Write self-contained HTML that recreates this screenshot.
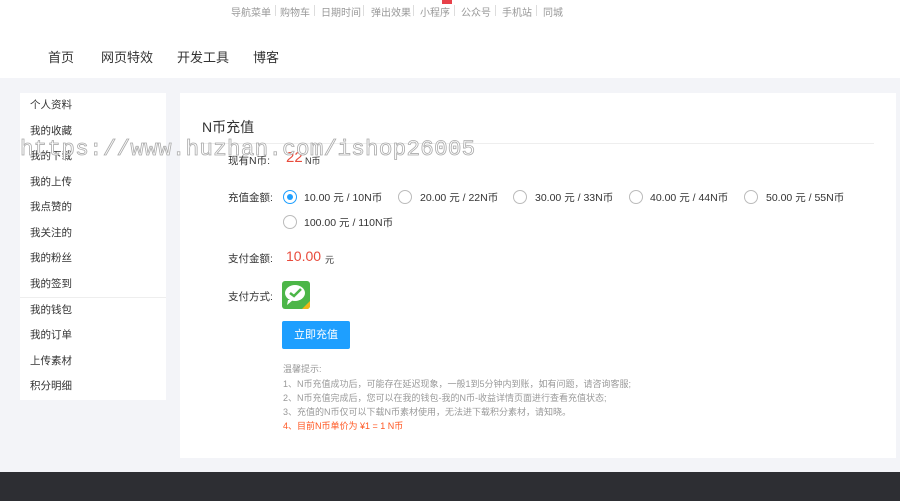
<!DOCTYPE html>
<html><head><meta charset="utf-8"><style>
*{margin:0;padding:0;box-sizing:border-box}
body{width:900px;height:501px;overflow:hidden;background:#f3f4f8;font-family:"Liberation Sans","Noto Sans CJK SC",sans-serif;position:relative;color:#333}
.a{position:absolute;white-space:nowrap}
#top{position:absolute;left:0;top:0;width:900px;height:78px;background:#fff}
.tn{font-size:10px;color:#999;top:4px}
.sep{position:absolute;top:5px;width:1px;height:11px;background:#ddd}
.nav{font-size:13px;color:#333;top:47px}
#side{position:absolute;left:20px;top:93px;width:146px;height:307px;background:#fff}
.si{font-size:10.5px;color:#333;left:30px}
#main{position:absolute;left:180px;top:93px;width:716px;height:365px;background:#fff}
.lb{font-size:10.5px;color:#333}
.r{position:absolute;width:14px;height:14px;border:1px solid #bbb;border-radius:50%}
.ro{font-size:10.5px;color:#333}
.tip{font-size:9px;color:#999;left:283px}
#foot{position:absolute;left:0;top:472px;width:900px;height:29px;background:#2d2e33}
</style></head><body>
<div id="top">
<span class="a tn" style="left:231px">导航菜单</span><div class="sep" style="left:275px"></div>
<span class="a tn" style="left:280px">购物车</span><div class="sep" style="left:314px"></div>
<span class="a tn" style="left:321px">日期时间</span><div class="sep" style="left:363px"></div>
<span class="a tn" style="left:371px">弹出效果</span><div class="sep" style="left:413px"></div>
<span class="a tn" style="left:420px">小程序</span><div class="sep" style="left:454px"></div>
<div class="a" style="left:442px;top:0;width:10px;height:4px;background:#e8414a"></div>
<span class="a tn" style="left:461px">公众号</span><div class="sep" style="left:495px"></div>
<span class="a tn" style="left:502px">手机站</span><div class="sep" style="left:536px"></div>
<span class="a tn" style="left:543px">同城</span>
<span class="a nav" style="left:48px">首页</span>
<span class="a nav" style="left:101px">网页特效</span>
<span class="a nav" style="left:177px">开发工具</span>
<span class="a nav" style="left:253px">博客</span>
</div>
<div id="side"></div>
<span class="a si" style="top:97px">个人资料</span>
<span class="a si" style="top:123px">我的收藏</span>
<span class="a si" style="top:148px">我的下载</span>
<span class="a si" style="top:174px">我的上传</span>
<span class="a si" style="top:199px">我点赞的</span>
<span class="a si" style="top:225px">我关注的</span>
<span class="a si" style="top:250px">我的粉丝</span>
<span class="a si" style="top:276px">我的签到</span>
<div class="a" style="left:20px;top:297px;width:146px;height:1px;background:#eee"></div>
<span class="a si" style="top:302px">我的钱包</span>
<span class="a si" style="top:327px">我的订单</span>
<span class="a si" style="top:353px">上传素材</span>
<span class="a si" style="top:378px">积分明细</span>
<div id="main"></div>
<span class="a" style="left:202px;top:117px;font-size:14px;color:#333">N币充值</span>
<div class="a" style="left:200px;top:143px;width:674px;height:1px;background:#eee"></div>
<span class="a lb" style="left:228px;top:153px">现有N币:</span>
<span class="a" style="left:286px;top:149px;font-size:15px;color:#e84b3c">22</span>
<span class="a" style="left:305px;top:154px;font-size:9px;color:#333">N币</span>
<span class="a lb" style="left:228px;top:190px">充值金额:</span>
<div class="r" style="left:283px;top:190px;border-color:#1e9fff"><div style="position:absolute;left:3px;top:3px;width:6px;height:6px;border-radius:50%;background:#1e9fff"></div></div>
<span class="a ro" style="left:304px;top:190px">10.00 元 / 10N币</span>
<div class="r" style="left:398px;top:190px"></div><span class="a ro" style="left:420px;top:190px">20.00 元 / 22N币</span>
<div class="r" style="left:513px;top:190px"></div><span class="a ro" style="left:535px;top:190px">30.00 元 / 33N币</span>
<div class="r" style="left:629px;top:190px"></div><span class="a ro" style="left:650px;top:190px">40.00 元 / 44N币</span>
<div class="r" style="left:744px;top:190px"></div><span class="a ro" style="left:766px;top:190px">50.00 元 / 55N币</span>
<div class="r" style="left:283px;top:215px"></div><span class="a ro" style="left:304px;top:215px">100.00 元 / 110N币</span>
<span class="a lb" style="left:228px;top:251px">支付金额:</span>
<span class="a" style="left:286px;top:248px;font-size:14px;color:#e84b3c">10.00</span>
<span class="a" style="left:325px;top:253px;font-size:9px;color:#333">元</span>
<span class="a lb" style="left:228px;top:289px">支付方式:</span>
<div class="a" style="left:282px;top:281px;width:28px;height:28px;background:#4cb648;border-radius:3px;overflow:hidden">
<svg width="28" height="28" viewBox="0 0 28 28"><ellipse cx="13" cy="12" rx="10" ry="8" fill="#fff"/><path d="M6 19 L5 24 L11 19Z" fill="#fff"/><path d="M8 12 L12 15 L19 8" stroke="#4cb648" stroke-width="2.5" fill="none"/><path d="M20 28 L28 20 L28 28Z" fill="#f2b518"/></svg></div>
<div class="a" style="left:282px;top:321px;width:68px;height:28px;background:#1e9fff;border-radius:2px;color:#fff;font-size:11px;text-align:center;line-height:28px">立即充值</div>
<span class="a tip" style="top:362px">温馨提示:</span>
<span class="a tip" style="top:377px">1、N币充值成功后，可能存在延迟现象，一般1到5分钟内到账，如有问题，请咨询客服;</span>
<span class="a tip" style="top:391px">2、N币充值完成后，您可以在我的钱包-我的N币-收益详情页面进行查看充值状态;</span>
<span class="a tip" style="top:405px">3、充值的N币仅可以下载N币素材使用，无法进下载积分素材，请知晓。</span>
<span class="a tip" style="top:419px;color:#ff5722">4、目前N币单价为 ¥1 = 1 N币</span>
<span class="a" style="left:20px;top:136px;font-family:'Liberation Mono',monospace;font-size:22.5px;color:#fff;-webkit-text-stroke:0.8px #aaa;letter-spacing:0.3px">https://www.huzhan.com/ishop26005</span>
<div id="foot"></div>
</body></html>
